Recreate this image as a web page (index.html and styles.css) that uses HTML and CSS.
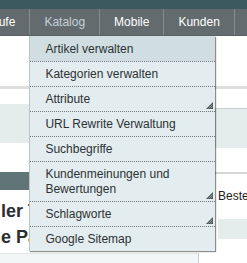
FILE: index.html
```html
<!DOCTYPE html>
<html lang="de">
<head>
<meta charset="utf-8">
<title>Katalog</title>
<link rel="stylesheet" href="styles.css">
</head>
<body>
<div class="topbar"></div>
<nav class="nav">
  <ul class="menu">
    <li class="menu-item">Verkäufe</li>
    <li class="menu-item active">Katalog
      <ul class="dropdown">
        <li class="dd-item hover">Artikel verwalten</li>
        <li class="dd-item">Kategorien verwalten</li>
        <li class="dd-item has-sub">Attribute<svg class="grip" width="7" height="7" viewBox="0 0 7 7"><polygon points="0,7 7,0 7,7" fill="#4b5257"/><path d="M2.5 6.5 L6.5 2.5 M4.5 6.5 L6.5 4.5" stroke="#a9b3b7" stroke-width="0.8"/></svg></li>
        <li class="dd-item">URL Rewrite Verwaltung</li>
        <li class="dd-item">Suchbegriffe</li>
        <li class="dd-item has-sub">Kundenmeinungen und Bewertungen<svg class="grip" width="7" height="7" viewBox="0 0 7 7"><polygon points="0,7 7,0 7,7" fill="#4b5257"/><path d="M2.5 6.5 L6.5 2.5 M4.5 6.5 L6.5 4.5" stroke="#a9b3b7" stroke-width="0.8"/></svg></li>
        <li class="dd-item has-sub">Schlagworte<svg class="grip" width="7" height="7" viewBox="0 0 7 7"><polygon points="0,7 7,0 7,7" fill="#4b5257"/><path d="M2.5 6.5 L6.5 2.5 M4.5 6.5 L6.5 4.5" stroke="#a9b3b7" stroke-width="0.8"/></svg></li>
        <li class="dd-item">Google Sitemap</li>
      </ul>
    </li>
    <li class="menu-item">Mobile</li>
    <li class="menu-item">Kunden</li>
    <li class="menu-item">Promotions</li>
  </ul>
</nav>
<main class="content">
  <div class="band-top"></div>
  <div class="rule"></div>
  <div class="columns">
    <section class="col-left">
      <div class="gap-a"></div>
      <div class="tint-a"></div>
      <div class="gap-b"></div>
      <div class="slate"></div>
      <h1 class="title"><span class="title-line">ler Titel</span><span class="title-line">e Page</span></h1>
    </section>
    <section class="col-right">
      <div class="gap-c"></div>
      <div class="tint-b"></div>
      <div class="gap-d"></div>
      <div class="box">
        <p class="box-text">Bestellungen</p>
        <div class="tint-c"></div>
      </div>
    </section>
    <div class="foot-left"></div>
    <div class="foot-right"></div>
  </div>
</main>
</body>
</html>
```

FILE: styles.css
```css
* { box-sizing: border-box; }
html, body { margin: 0; padding: 0; overflow: hidden; }
body {
  width: 247px;
  height: 263px;
  background: #fff;
  font-family: "Liberation Sans", Arial, sans-serif;
  font-size: 12px;
}
.topbar {
  height: 9px;
  background: #3c5960;
}
.nav {
  height: 27px;
  background: #636b6e;
  border-bottom: 1px solid #5a6164;
}
.menu {
  display: flex;
  margin: 0 0 0 -46px;
  padding: 0;
  list-style: none;
  white-space: nowrap;
}
.menu-item {
  flex-shrink: 0;
  position: relative;
  padding: 0 14px;
  line-height: 26px;
  color: #fff;
  border-left: 1px solid #858c8f;
}
.menu-item:first-child { border-left: 0; }
.menu-item.active { color: #c3d2d8; }
.dropdown {
  position: absolute;
  top: 27px;
  left: -1px;
  width: 186px;
  margin: 0;
  padding: 0;
  list-style: none;
  background: #e3ecee;
  border-left: 1px solid #b9c4c7;
  box-shadow: 1px 1px 1px rgba(0, 0, 0, 0.45);
  white-space: normal;
  z-index: 10;
}
.dd-item {
  position: relative;
  padding: 5px 16px 4px 15px;
  line-height: 15px;
  color: #2d3235;
  border-top: 1px dotted #6f7679;
}
.dd-item:first-child { border-top: 0; padding-top: 6px; }
.dd-item.hover { background: #d0dee2; }
.dd-item.has-sub { padding-right: 30px; }
.grip {
  position: absolute;
  right: 2px;
  bottom: 2px;
  display: block;
}
.band-top { height: 50px; }
.rule { height: 3px; background: #dedede; }
.columns {
  display: grid;
  grid-template-columns: 198px 1fr;
}
.gap-a { height: 15px; }
.tint-a { height: 39px; background: #e5ecec; }
.gap-b { height: 29px; }
.slate { height: 18px; background: #617478; }
.title {
  margin: 8px 0 0 0;
  padding-left: 1px;
  font-size: 18px;
  line-height: 26px;
  font-weight: bold;
  color: #2c2f31;
}
.title-line { display: block; white-space: nowrap; }
.gap-c { height: 19px; }
.tint-b { height: 40px; background: #e5ecec; border-top: 1px solid #c9cfd1; }
.gap-d { height: 24px; }
.box { border-top: 2px solid #d6d6d6; border-left: 1px solid #d6d6d6; padding-left: 19px; }
.box-text { margin: 14px 0 0 0; line-height: 16px; color: #222; font-size: 12px; white-space: nowrap; }
.tint-c { margin-top: 15px; height: 20px; background: #e5ecec; }
.foot-left { margin-top: 3px; height: 10px; border-top: 1px solid #e2e6e7; background: #f3f6f6; }
.foot-right { margin-top: 3px; height: 10px; border-left: 1px solid #c9cfd1; }
```
